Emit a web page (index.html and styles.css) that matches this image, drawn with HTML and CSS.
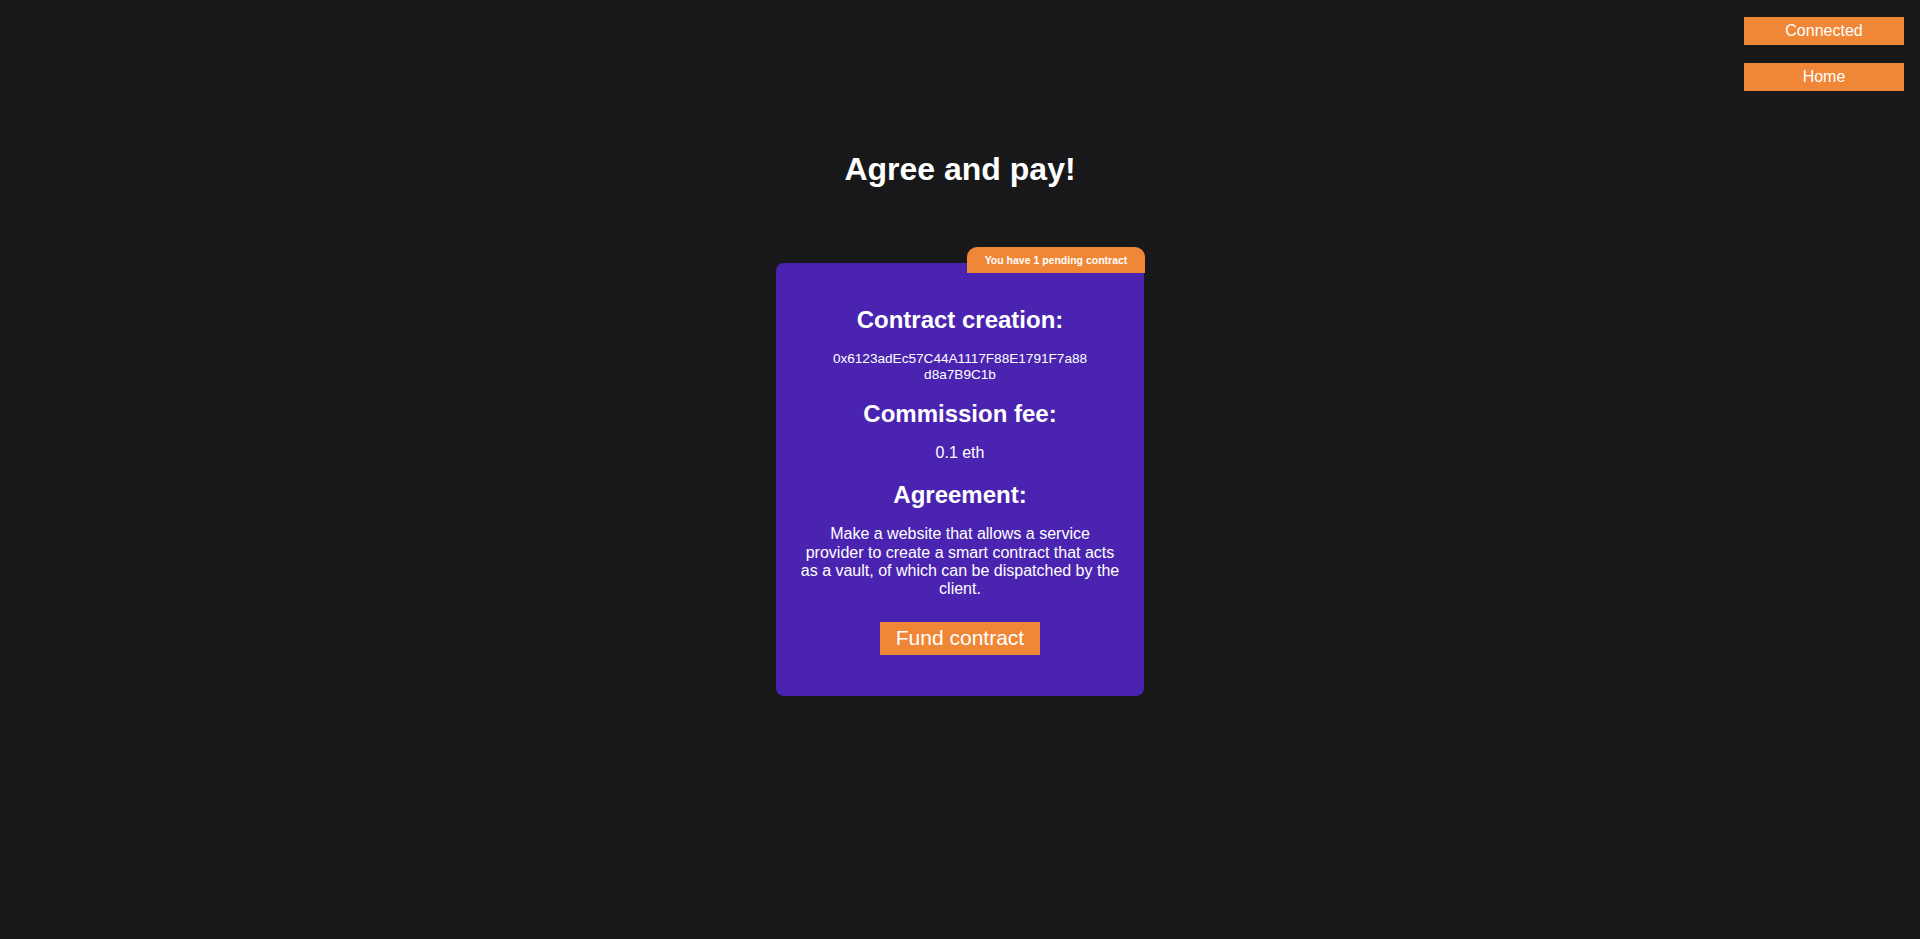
FILE: index.html
```html
<!DOCTYPE html>
<html lang="en">
<head>
<meta charset="utf-8">
<title>Agree and pay!</title>
<link rel="stylesheet" href="styles.css">
</head>
<body>
  <header class="topnav">
    <button class="nav-btn">Connected</button>
    <button class="nav-btn">Home</button>
  </header>
  <main class="main">
    <h1 class="title">Agree and pay!</h1>
    <section class="card">
      <div class="badge">You have 1 pending contract</div>
      <h2 class="card-heading">Contract creation:</h2>
      <p class="address">0x6123adEc57C44A1117F88E1791F7a88<br>d8a7B9C1b</p>
      <h2 class="card-heading">Commission fee:</h2>
      <p class="card-text">0.1 eth</p>
      <h2 class="card-heading">Agreement:</h2>
      <p class="card-text">Make a website that allows a service provider to create a smart contract that acts as a vault, of which can be dispatched by the client.</p>
      <button class="fund-btn">Fund contract</button>
    </section>
  </main>
</body>
</html>
```

FILE: styles.css
```css
html, body {
  margin: 0;
  padding: 0;
}
body {
  background: #18181a;
  color: #ffffff;
  font-family: "Liberation Sans", Arial, sans-serif;
  min-height: 939px;
}
.topnav {
  display: flex;
  flex-direction: column;
  align-items: flex-end;
  gap: 18px;
  padding: 17px 16px 0 0;
}
.nav-btn {
  width: 160px;
  height: 28px;
  border: none;
  background: #ef8737;
  color: #ffffff;
  font-family: "Liberation Sans", Arial, sans-serif;
  font-size: 16px;
  padding: 0;
  cursor: pointer;
}
.main {
  display: flex;
  flex-direction: column;
  align-items: center;
}
.title {
  margin: 60px 0 0;
  font-size: 32px;
  font-weight: bold;
  line-height: 37px;
}
.card {
  position: relative;
  margin-top: 75px;
  width: 368px;
  box-sizing: border-box;
  background: #4a24b0;
  border-radius: 8px;
  padding: 43px 24px 41px;
  display: flex;
  flex-direction: column;
  align-items: center;
  text-align: center;
  gap: 17px;
}
.badge {
  position: absolute;
  top: -16px;
  right: -1px;
  width: 178px;
  height: 26px;
  box-sizing: border-box;
  background: #ef8737;
  border-radius: 10px 10px 0 0;
  font-size: 10.5px;
  font-weight: bold;
  line-height: 26px;
  text-align: center;
  white-space: nowrap;
}
.card-heading {
  margin: 0;
  font-size: 24px;
  font-weight: bold;
  line-height: 27.6px;
}
.address {
  margin: 0;
  font-size: 13.6px;
  line-height: 16px;
}
.card-text {
  margin: 0 0 1px;
  font-size: 16px;
  line-height: 18.4px;
}
.fund-btn {
  margin-top: 5px;
  width: 160px;
  height: 33px;
  border: none;
  background: #ef8737;
  color: #ffffff;
  font-family: "Liberation Sans", Arial, sans-serif;
  font-size: 21px;
  padding: 0;
  cursor: pointer;
}
```
